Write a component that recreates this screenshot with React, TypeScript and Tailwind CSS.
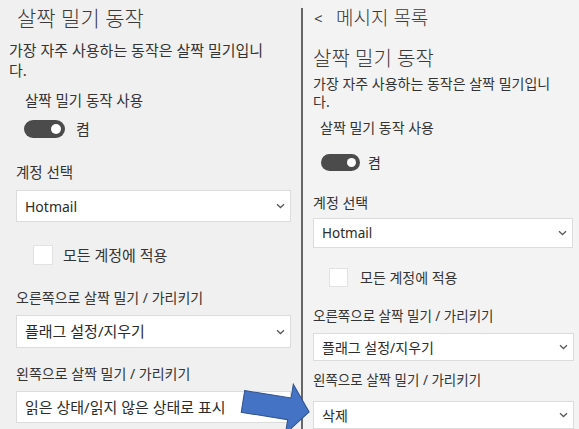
import React from 'react';

const font = "font-['Noto_Sans','Noto_Sans_CJK_KR',sans-serif]";

function Chevron() {
  return (
    <svg width="9" height="6" viewBox="0 0 9 6" className="shrink-0">
      <path d="M1 1.2l3.5 3.3 3.5-3.3" fill="none" stroke="#5a5a5a" strokeWidth="1.3" />
    </svg>
  );
}

function Select(props: { value: string; className: string; textClass: string }) {
  return (
    <div
      className={`flex items-center justify-between bg-white border border-[#dcdcdc] pl-2 pr-[5px] ${props.className}`}
    >
      <span className={`${props.textClass} text-[#2b2b2b] whitespace-nowrap`}>{props.value}</span>
      <Chevron />
    </div>
  );
}

function Toggle(props: { className: string; knob: string }) {
  return (
    <div className={`flex items-center justify-end rounded-full bg-[#4b4b4b] ${props.className}`}>
      <div className={`rounded-full bg-white ${props.knob}`} />
    </div>
  );
}

function LeftPanel() {
  return (
    <div className="w-[301px] shrink-0 h-full bg-[#f0f0f0] pt-1 border-t-[3px] border-[#f8f8f8] -mt-[3px]">
      <div className="pl-[17px] text-[21px] leading-[28px] font-light text-[#3a3a3a]">살짝 밀기 동작</div>
      <div className="mt-2 pl-[9px] text-[15px] leading-[20px] text-[#333]">
        <div>가장 자주 사용하는 동작은 살짝 밀기입니</div>
        <div>다.</div>
      </div>
      <div className="mt-[10px] pl-[25px] text-[14.5px] leading-[20px] text-[#333]">살짝 밀기 동작 사용</div>
      <div className="mt-[10px] pl-[24px] flex items-center gap-[11px]">
        <Toggle className="w-[41px] h-[18px] pr-[4px]" knob="w-[10px] h-[10px]" />
        <span className="text-[15px] leading-[18px] text-[#333]">켬</span>
      </div>
      <div className="mt-6 pl-4 text-[14.5px] leading-[20px] text-[#333]">계정 선택</div>
      <div className="mt-2 pl-4 pr-[10px]">
        <Select value="Hotmail" className="h-[32px]" textClass="text-[14px]" />
      </div>
      <div className="mt-[23px] pl-[33px] flex items-center gap-[10px]">
        <div className="w-[20px] h-[20px] bg-white border border-[#e2e2e2]" />
        <span className="text-[15px] leading-[20px] text-[#333]">모든 계정에 적용</span>
      </div>
      <div className="mt-[23px] pl-4 text-[14px] leading-[20px] text-[#333]">오른쪽으로 살짝 밀기 / 가리키기</div>
      <div className="mt-[7px] pl-4 pr-[10px]">
        <Select value="플래그 설정/지우기" className="h-[33px]" textClass="text-[15px]" />
      </div>
      <div className="mt-4 pl-4 text-[14px] leading-[20px] text-[#333]">왼쪽으로 살짝 밀기 / 가리키기</div>
      <div className="mt-[7px] pl-4 pr-[10px]">
        <Select value="읽은 상태/읽지 않은 상태로 표시" className="h-[32px]" textClass="text-[15px]" />
      </div>
    </div>
  );
}

function RightPanel() {
  return (
    <div className="flex-1 h-full bg-[#f3f3f3] pl-[10px] pr-[5px] pt-[6px]">
      <div className="flex items-center text-[19px] leading-[24px] text-[#3a3a3a]">
        <span className="pl-[1px] w-[23px] text-[15px]">&lt;</span>
        <span className="font-light">메시지 목록</span>
      </div>
      <div className="mt-4 text-[20px] leading-[26px] font-light text-[#3a3a3a]">살짝 밀기 동작</div>
      <div className="mt-[3px] text-[14px] leading-[18px] text-[#333]">
        <div>가장 자주 사용하는 동작은 살짝 밀기입니</div>
        <div>다.</div>
      </div>
      <div className="mt-2 pl-[7px] text-[14px] leading-[18px] text-[#333]">살짝 밀기 동작 사용</div>
      <div className="mt-[17px] pl-2 flex items-center gap-[8px]">
        <Toggle className="w-[39px] h-[17px] pr-[4px]" knob="w-[9px] h-[9px]" />
        <span className="text-[14px] leading-[17px] text-[#333]">켬</span>
      </div>
      <div className="mt-[23px] text-[14px] leading-[18px] text-[#333]">계정 선택</div>
      <div className="mt-[6px] pr-[1px]">
        <Select value="Hotmail" className="h-[30px]" textClass="text-[13.5px]" />
      </div>
      <div className="mt-5 pl-4 flex items-center gap-3">
        <div className="w-[19px] h-[19px] bg-white border border-[#e2e2e2]" />
        <span className="text-[14px] leading-[19px] text-[#333]">모든 계정에 적용</span>
      </div>
      <div className="mt-5 text-[13.5px] leading-[18px] text-[#333]">오른쪽으로 살짝 밀기 / 가리키기</div>
      <div className="mt-2">
        <Select value="플래그 설정/지우기" className="h-[28px]" textClass="text-[14px]" />
      </div>
      <div className="mt-[10px] text-[13.5px] leading-[18px] text-[#333]">왼쪽으로 살짝 밀기 / 가리키기</div>
      <div className="mt-3">
        <Select value="삭제" className="h-[28px]" textClass="text-[14px]" />
      </div>
    </div>
  );
}

function Arrow() {
  return (
    <svg className="absolute inset-0 pointer-events-none" width="579" height="429" viewBox="0 0 579 429">
      <g transform="translate(240 401) rotate(9)">
        <path
          d="M3 -11 L50 -11 L50 -25 L70 0 L50 25 L50 11 L3 11 Z"
          fill="#4472c4"
          stroke="#2f528f"
          strokeWidth="1"
        />
      </g>
    </svg>
  );
}

export default function App() {
  return (
    <div className={`relative w-[579px] h-[429px] overflow-hidden bg-[#f0f0f0] flex ${font}`}>
      <LeftPanel />
      <div className="w-[2px] shrink-0 mt-2 bg-[#666]" />
      <RightPanel />
      <Arrow />
    </div>
  );
}
